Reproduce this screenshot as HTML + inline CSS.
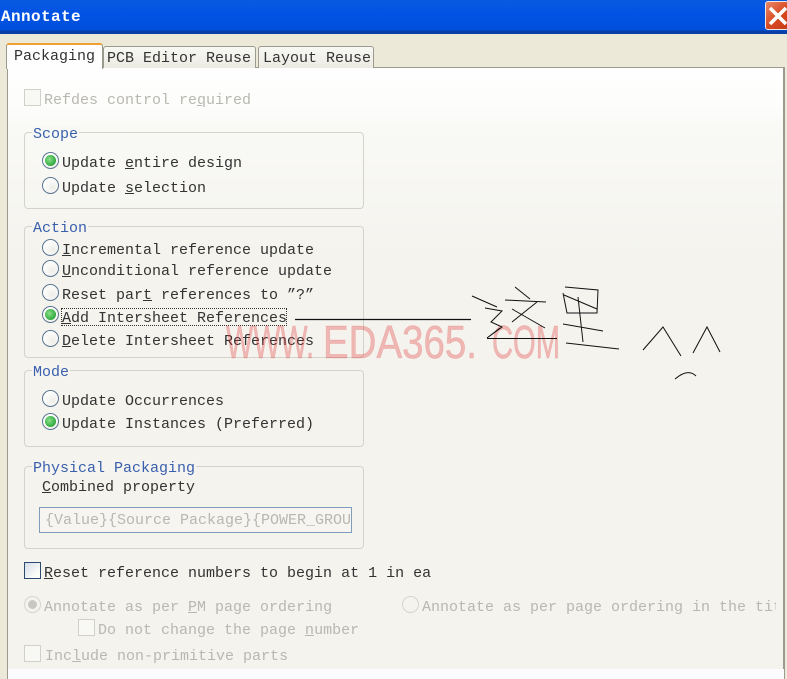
<!DOCTYPE html>
<html><head><meta charset="utf-8"><style>
html,body{margin:0;padding:0}
body{width:787px;height:679px;position:relative;overflow:hidden;background:#ece9d8;font-family:"Liberation Mono","Noto Sans CJK SC",monospace;font-size:15px;line-height:18px;color:#333}
.a,.t,.r,.c,.g,.l{position:absolute}
.t{white-space:pre;margin-top:1px}
.d{color:#b8b7b0}
.g{left:24px;width:338px;border:1px solid #d4d3cb;border-radius:4px}
.l{left:32px;padding:0 1px;background:#f5f4f0;color:#3a60ac;white-space:pre;margin-top:1px}
.r{width:15px;height:15px;border:1px solid #5a7590;border-radius:50%;background:radial-gradient(circle at 65% 65%,#eeede7,#fff 70%);left:42px}
.r.on:after{content:"";position:absolute;left:2px;top:2px;width:11px;height:11px;border-radius:50%;background:radial-gradient(circle at 40% 40%,#8be08b,#2fa83c 70%,#9fd8a4)}
.r.dis{border-color:#d6d5cd;background:#f4f3ee}
.c{width:15px;height:15px;border:1px solid #d2d1c9;background:#f8f8f5}
</style></head><body>
<div class="a" style="left:0;top:0;width:787px;height:33px;background:linear-gradient(#0a5ae0,#0253e4 40%,#0050dc 85%,#0442b8)"></div>
<div class="a" style="left:0;top:31px;width:787px;height:3px;background:#0a3fa8"></div>
<div class="t" style="left:1px;top:7px;color:#fff;font-size:16px;letter-spacing:.4px;font-weight:bold">Annotate</div>
<div class="a" style="left:765px;top:1px;width:24px;height:29px;background:linear-gradient(135deg,#e88a6c,#d8481f 55%,#c43c18);border:1px solid #f0e8e0;border-radius:3px;box-sizing:border-box"></div>
<svg class="a" style="left:765px;top:1px" width="22" height="29"><path d="M5 7L21 23M21 7L5 23" stroke="#fff" stroke-width="3.6" fill="none"/></svg>

<div class="a" style="left:7px;top:67px;width:777px;height:602px;border:1px solid #9a9a8e;border-bottom:0;box-sizing:border-box;background:linear-gradient(#fefefe,#fdfdfc 6%,#f9f9f6 10%,#f4f3ee 32%,#f4f3ee)"></div>
<div class="a" style="left:7px;top:669px;width:778px;height:10px;background:#fcfcfe;border-left:1px solid #9a9a8e;box-sizing:border-box"></div>
<div class="a" style="left:784px;top:67px;width:1px;height:612px;background:#9a9a8e"></div>

<div class="a" style="left:103px;top:46px;width:153px;height:22px;background:linear-gradient(#f8f8f4,#ecebe2);border:1px solid #9a9a8e;border-bottom:0;border-radius:3px 3px 0 0;box-sizing:border-box"></div>
<div class="a" style="left:258px;top:46px;width:116px;height:22px;background:linear-gradient(#f8f8f4,#ecebe2);border:1px solid #9a9a8e;border-bottom:0;border-radius:3px 3px 0 0;box-sizing:border-box"></div>
<div class="a" style="left:6px;top:43px;width:97px;height:26px;background:#fefefe;border:1px solid #9a9a8e;border-top:2px solid #f0a030;border-bottom:0;border-radius:3px 3px 0 0;box-sizing:border-box"></div>
<div class="t" style="left:14px;top:47px">Packaging</div>
<div class="t" style="left:107px;top:49px">PCB Editor Reuse</div>
<div class="t" style="left:263px;top:49px">Layout Reuse</div>

<div class="c" style="left:24px;top:89px"></div>
<div class="t d" style="left:44px;top:91px">Refdes control re<u>q</u>uired</div>

<div class="g" style="top:132px;height:75px"></div>
<div class="l" style="top:125px;background:#f8f8f5">Scope</div>
<div class="r on" style="top:152px"></div><div class="t" style="left:62px;top:154px">Update <u>e</u>ntire design</div>
<div class="r" style="top:177px"></div><div class="t" style="left:62px;top:179px">Update <u>s</u>election</div>

<div class="g" style="top:226px;height:130px"></div>
<div class="l" style="top:219px">Action</div>
<div class="r" style="top:239px"></div><div class="t" style="left:62px;top:241px"><u>I</u>ncremental reference update</div>
<div class="r" style="top:260px"></div><div class="t" style="left:62px;top:262px"><u>U</u>nconditional reference update</div>
<div class="r" style="top:284px"></div><div class="t" style="left:62px;top:286px">Reset par<u>t</u> references to ”?”</div>
<div class="r on" style="top:306px"></div><div class="t" style="left:62px;top:309px"><u>A</u>dd Intersheet References</div>
<div class="a" style="left:61px;top:308px;width:226px;height:18px;border:1px dotted #333;box-sizing:border-box"></div>
<div class="r" style="top:330px"></div><div class="t" style="left:62px;top:332px"><u>D</u>elete Intersheet References</div>

<div class="g" style="top:370px;height:75px"></div>
<div class="l" style="top:363px">Mode</div>
<div class="r" style="top:390px"></div><div class="t" style="left:62px;top:392px">Update Occurrences</div>
<div class="r on" style="top:413px"></div><div class="t" style="left:62px;top:415px">Update Instances (Preferred)</div>

<div class="g" style="top:466px;height:81px"></div>
<div class="l" style="top:459px">Physical Packaging</div>
<div class="t" style="left:42px;top:478px"><u>C</u>ombined property</div>
<div class="a" style="left:39px;top:507px;width:313px;height:26px;border:1px solid #7f9db9;box-sizing:border-box;background:#f6f5f1"></div>
<div class="t d" style="left:45px;top:511px;width:306px;overflow:hidden">{Value}{Source Package}{POWER_GROUP}</div>

<div class="c" style="left:24px;top:562px;border-color:#2c4a70;background:linear-gradient(135deg,#d4dde8,#fbfbf8 75%)"></div>
<div class="t" style="left:44px;top:564px"><u>R</u>eset reference numbers to begin at 1 in ea</div>

<div class="r dis" style="left:24px;top:596px"></div>
<div class="a" style="left:28px;top:600px;width:9px;height:9px;border-radius:50%;background:#c8c7c0"></div>
<div class="t d" style="left:44px;top:598px">Annotate as per <u>P</u>M page ordering</div>
<div class="r dis" style="left:402px;top:596px"></div>
<div class="t d" style="left:422px;top:598px;width:354px;overflow:hidden">Annotate as per page ordering in the title</div>
<div class="c" style="left:78px;top:619px"></div>
<div class="t d" style="left:98px;top:621px">Do not change the page <u>n</u>umber</div>
<div class="c" style="left:24px;top:645px"></div>
<div class="t d" style="left:45px;top:647px">Inc<u>l</u>ude non-primitive parts</div>

<svg class="a" style="left:0;top:0" width="787" height="679">
<g font-family="Liberation Sans" font-size="46" fill="#e23030" fill-opacity=".3" stroke="#e23030" stroke-opacity=".18" stroke-width=".8" lengthAdjust="spacingAndGlyphs">
<text x="226" y="358" textLength="88" lengthAdjust="spacingAndGlyphs">WWW.</text>
<text x="323" y="358" textLength="154" lengthAdjust="spacingAndGlyphs">EDA365.</text>
<text x="492" y="358" textLength="68" lengthAdjust="spacingAndGlyphs">COM</text>
</g>
<g fill="none" stroke="#111" stroke-width="1">
<path d="M295 319.5H471" stroke-width="1.2"/>
<path d="M472 296L497 307M485 308L502 311L491 322L502 327L487 338L500 328M487 338.500H557"/>
<path d="M515 287L530 299M505 300L546 302M537 302L512 322M512 309L545 328"/>
<path d="M565 287L598 290L597 313L567 313L563 293M564 295L597 309M578 297L583 342M563 324L603 331M566 343L619 349"/>
<path d="M643 350L663 327L681 356M693 353L707 327L720 352M675 379Q688 368 696 376"/>
</g></svg>
</body></html>
